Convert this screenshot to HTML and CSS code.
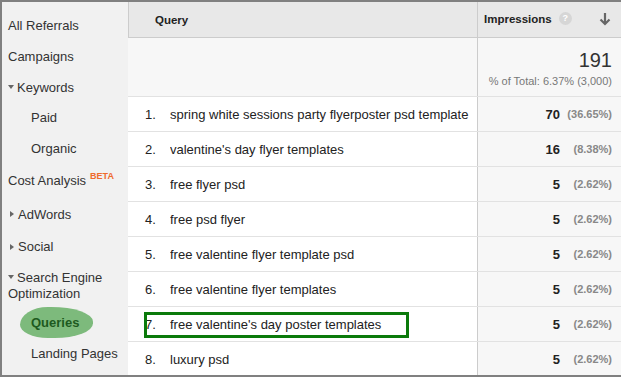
FILE: index.html
```html
<!DOCTYPE html>
<html lang="en">
<head>
    <meta charset="UTF-8">
    <title>Queries</title>
    <link rel="stylesheet" href="styles.css">
</head>
<body>
    <div class="frame">
        <nav class="side">
            <div class="item h31">All Referrals</div>
            <div class="item h31">Campaigns</div>
            <div class="item h30"><span class="tri down"></span>Keywords</div>
            <div class="item h30 sub">Paid</div>
            <div class="item h32 sub">Organic</div>
            <div class="item h33">Cost Analysis <sup class="beta">BETA</sup></div>
            <div class="item h34"><span class="tri right"></span>AdWords</div>
            <div class="item h31"><span class="tri right"></span>Social</div>
            <div class="item seo"><span class="tri down"></span>Search Engine<br>Optimization</div>
            <div class="item active"><span class="blob">Queries</span></div>
            <div class="item h30 sub">Landing Pages</div>
        </nav>
        <div class="report">
            <div class="row head">
                <div class="q_head">Query</div>
                <div class="imp_head">
                    Impressions
                    <span class="help">?</span>
                    <svg class="sort" width="12" height="14" viewBox="0 0 12 14">
                        <path d="M6 1 V12 M1.5 7.5 L6 12 L10.5 7.5" fill="none" stroke="#666" stroke-width="2.2"/>
                    </svg>
                </div>
            </div>
            <div class="row summary">
                <div class="blank"></div>
                <div class="imp">
                    <div class="total">191</div>
                    <div class="of_total">% of Total: 6.37% (3,000)</div>
                </div>
            </div>
            <div class="row"><div class="num">1.</div><div class="q">spring white sessions party flyerposter psd template</div><div class="imp"><b>70</b><span class="pct">(36.65%)</span></div></div>
            <div class="row"><div class="num">2.</div><div class="q">valentine's day flyer templates</div><div class="imp"><b>16</b><span class="pct">(8.38%)</span></div></div>
            <div class="row"><div class="num">3.</div><div class="q">free flyer psd</div><div class="imp"><b>5</b><span class="pct">(2.62%)</span></div></div>
            <div class="row"><div class="num">4.</div><div class="q">free psd flyer</div><div class="imp"><b>5</b><span class="pct">(2.62%)</span></div></div>
            <div class="row"><div class="num">5.</div><div class="q">free valentine flyer template psd</div><div class="imp"><b>5</b><span class="pct">(2.62%)</span></div></div>
            <div class="row"><div class="num">6.</div><div class="q">free valentine flyer templates</div><div class="imp"><b>5</b><span class="pct">(2.62%)</span></div></div>
            <div class="row marked"><div class="num">7.</div><div class="q">free valentine's day poster templates</div><div class="imp"><b>5</b><span class="pct">(2.62%)</span></div><span class="mark"></span></div>
            <div class="row"><div class="num">8.</div><div class="q">luxury psd</div><div class="imp"><b>5</b><span class="pct">(2.62%)</span></div></div>
        </div>
    </div>
</body>
</html>
```

FILE: styles.css
```css
body {
    margin: 0;
    font-family: "Liberation Sans", Arial, sans-serif;
    color: #222;
}
.frame {
    display: flex;
    width: 621px;
    height: 377px;
    box-sizing: border-box;
    border-top: 2px solid #808080;
    border-left: 2px solid #808080;
    border-bottom: 2px solid #808080;
    overflow: hidden;
}
.side {
    width: 126px;
    flex: none;
    background: #f1f1f1;
    padding-top: 8px;
    font-size: 13px;
    color: #333;
}
.item {
    display: flex;
    align-items: center;
    padding-left: 6px;
}
.h30 { height: 30px; }
.h31 { height: 31px; }
.h32 { height: 32px; }
.h33 { height: 33px; }
.h34 { height: 34px; }
.sub {
    padding-left: 29px;
}
.tri {
    display: inline-block;
    width: 0;
    height: 0;
    margin-right: 3px;
}
.tri.down {
    border-left: 3.5px solid transparent;
    border-right: 3.5px solid transparent;
    border-top: 4px solid #666;
}
.tri.right {
    margin-left: 2px;
    margin-right: 4px;
    border-top: 3.5px solid transparent;
    border-bottom: 3.5px solid transparent;
    border-left: 4px solid #666;
}
.beta {
    font-size: 9px;
    font-weight: bold;
    color: #ef6a2c;
    margin-left: 4px;
    align-self: flex-start;
    margin-top: 7px;
}
.seo {
    display: block;
    height: 40px;
    padding-top: 8px;
    box-sizing: border-box;
    line-height: 16px;
}
.seo .tri {
    vertical-align: middle;
    position: relative;
    top: -2px;
}
.active {
    height: 36px;
    padding-left: 18px;
    align-items: flex-start;
}
.blob {
    margin-top: 5px;
    width: 73px;
    height: 31px;
    box-sizing: border-box;
    padding: 8px 0 0 11px;
    background: #7dba7c;
    border-radius: 40% 60% 55% 40% / 60% 50% 50% 45%;
    font-weight: bold;
    color: #1d5a20;
}
.report {
    flex: 1;
    font-size: 13px;
}
.row {
    display: grid;
    grid-template-columns: 42px 1fr 144px;
    height: 35px;
    box-sizing: border-box;
    border-bottom: 1px solid #e2e2e2;
    background: #fff;
    align-items: center;
}
.row > div {
    height: 100%;
    display: flex;
    align-items: center;
    box-sizing: border-box;
}
.head {
    height: 36px;
    background: #e8e8e8;
    border-bottom: 1px solid #cccccc;
    border-left: 1px solid #cccccc;
    grid-template-columns: 1fr 144px;
    font-size: 11.5px;
    font-weight: bold;
    color: #222;
}
.q_head {
    padding-left: 26px;
}
.row > .imp_head {
    border-left: 1px solid #cccccc;
    padding-left: 6px;
    white-space: nowrap;
    padding-bottom: 2px;
}
.help {
    display: inline-block;
    width: 13px;
    height: 13px;
    border-radius: 50%;
    background: #d6d6d6;
    color: #fff;
    font-size: 9px;
    text-align: center;
    line-height: 13px;
    margin-left: 7px;
}
.sort {
    margin-left: 27px;
}
.summary {
    height: 59px;
    background: #f7f7f7;
    grid-template-columns: 1fr 144px;
}
.row > .imp {
    background: #f7f7f7;
    border-left: 1px solid #cccccc;
    justify-content: flex-end;
    padding-right: 9px;
}
.summary > .imp {
    flex-direction: column;
    align-items: flex-end;
    justify-content: flex-start;
    padding-top: 11px;
}
.total {
    font-size: 20px;
    color: #333;
    line-height: 22px;
}
.of_total {
    font-size: 11px;
    color: #777;
    margin-top: 4px;
}
.row > .num {
    padding-left: 17px;
}
.q {
    white-space: nowrap;
    overflow: hidden;
}
.imp b {
    font-size: 13px;
}
.pct {
    display: inline-block;
    width: 50px;
    margin-left: 2px;
    text-align: right;
    font-size: 11px;
    font-weight: bold;
    color: #888;
}
.marked {
    position: relative;
}
.mark {
    position: absolute;
    left: 16px;
    top: 5px;
    width: 265px;
    height: 26px;
    box-sizing: border-box;
    border: 3px solid #0b7a0b;
}
```
